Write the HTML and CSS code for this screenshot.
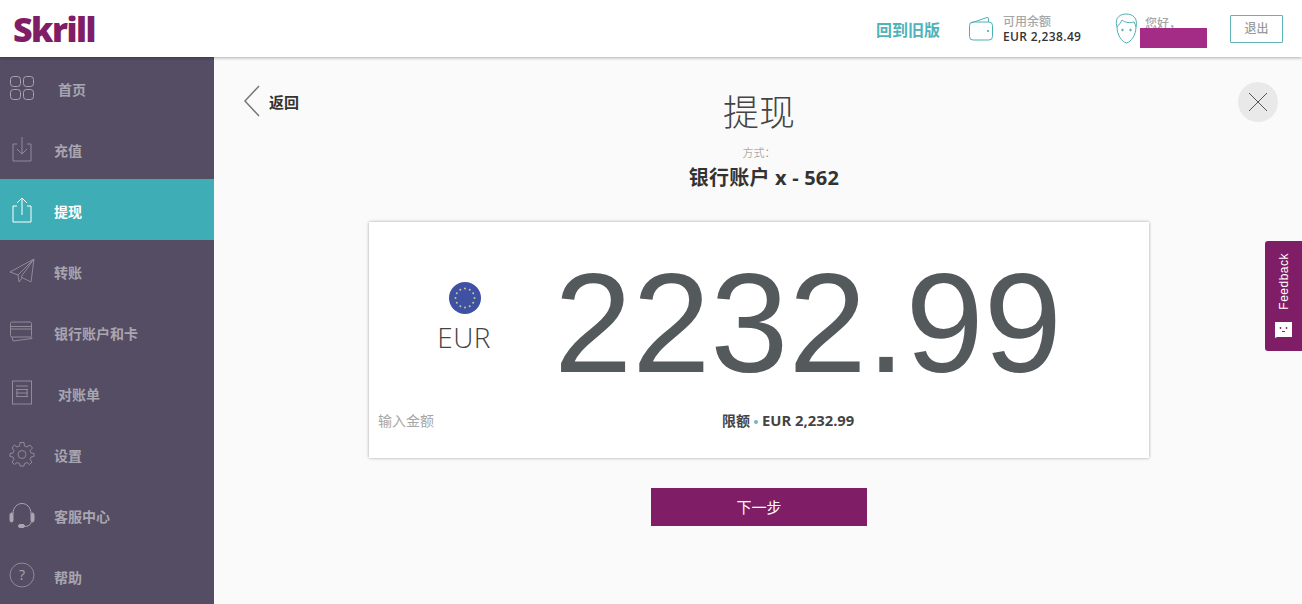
FILE: index.html
```html
<!DOCTYPE html>
<html lang="zh">
<head>
    <meta charset="UTF-8">
    <meta name="viewport" content="width=device-width, initial-scale=1.0">
    <title>提现</title>
    <link rel="stylesheet" href="styles.css">
</head>
<body>

    <!-- Top bar -->
    <header class="topbar">
        <div class="logo">Skrill</div>
        <div class="topbar-right">
            <a class="old-version">回到旧版</a>
            <div class="balance">
                <svg class="wallet-icon" width="25" height="26" viewBox="0 0 25 26" fill="none" stroke="#4fb0b3" stroke-width="1">
                    <path d="M2 7 L18 1.5 Q19.5 1 19.5 3 V6"/>
                    <rect x="0.5" y="6" width="23" height="18" rx="3.5"/>
                    <circle cx="19" cy="15" r="0.7" fill="#4fb0b3"/>
                </svg>
                <div class="balance-text">
                    <div class="balance-label">可用余额</div>
                    <div class="balance-value">EUR 2,238.49</div>
                </div>
            </div>
            <div class="user">
                <svg class="face-icon" width="23" height="31" viewBox="0 0 23 31" fill="none" stroke="#4fb0b3" stroke-width="1">
                    <path d="M2 14 C-1 4 6 1 11 1 C18 1 23 5 21 14 C21 22 16 29 11.500 30 C7 29 2 22 2 14 Z"/>
                    <path d="M2 14 C4 12 6 9 7 7 C10 10 16 10 19 9 C20 11 20.500 12 21 14"/>
                    <circle cx="7.500" cy="17" r="0.8" fill="#4fb0b3"/>
                    <circle cx="15.500" cy="17" r="0.8" fill="#4fb0b3"/>
                </svg>
                <div class="user-text">您好，</div>
                <div class="user-mask"></div>
            </div>
            <a class="logout">退出</a>
        </div>
    </header>

    <div class="page">

        <!-- Sidebar -->
        <nav class="sidebar">
            <a class="nav-item">
                <svg class="nav-icon" width="26" height="26" viewBox="0 0 26 26" fill="none" stroke="#a9a5b1">
                    <rect x="1.500" y="1.500" width="10" height="10" rx="3"/>
                    <rect x="14.500" y="1.500" width="10" height="10" rx="3"/>
                    <rect x="1.500" y="14.500" width="10" height="10" rx="3"/>
                    <rect x="14.500" y="14.500" width="10" height="10" rx="3"/>
                </svg>
                <span class="nav-label nav-label-far">首页</span>
            </a>
            <a class="nav-item">
                <svg class="nav-icon" width="26" height="26" viewBox="0 0 26 26" fill="none" stroke="#8f8b99">
                    <path d="M8 8 H4 V25 H22 V8 H18"/>
                    <path d="M13 1 V18 M8 13 L13 18 L18 13"/>
                </svg>
                <span class="nav-label">充值</span>
            </a>
            <a class="nav-item active">
                <svg class="nav-icon" width="26" height="26" viewBox="0 0 26 26" fill="none" stroke="#fff">
                    <path d="M8 9 H4 V25 H22 V9 H18"/>
                    <path d="M13 18 V1 M8 6 L13 1 L18 6"/>
                </svg>
                <span class="nav-label">提现</span>
            </a>
            <a class="nav-item">
                <svg class="nav-icon" width="26" height="26" viewBox="0 0 26 26" fill="none" stroke="#8f8b99">
                    <path d="M25 1 L1 14 L9 17 L25 1 L12 19 L22 24 Z"/>
                    <path d="M9 17 L10 24 L13 20"/>
                </svg>
                <span class="nav-label">转账</span>
            </a>
            <a class="nav-item">
                <svg class="nav-icon" width="26" height="26" viewBox="0 0 26 26" fill="none" stroke="#8f8b99">
                    <rect x="1.500" y="3" width="21" height="15" rx="1.500"/>
                    <path d="M1.500 7.500 H22.500 M1.500 10 H22.500"/>
                    <path d="M3 18 L4 22 L23 19.500 L22.500 18"/>
                </svg>
                <span class="nav-label">银行账户和卡</span>
            </a>
            <a class="nav-item">
                <svg class="nav-icon" width="26" height="26" viewBox="0 0 26 26" fill="none" stroke="#8f8b99">
                    <rect x="3.500" y="1" width="19" height="23"/>
                    <path d="M7 6 H19 M7 9.500 H19 M7 13 H19 M7 16.500 H19 M8 9.500 V16.500 M18 9.500 V16.500"/>
                </svg>
                <span class="nav-label nav-label-far">对账单</span>
            </a>
            <a class="nav-item">
                <svg class="nav-icon" width="26" height="26" viewBox="0 0 26 26" fill="none" stroke="#8f8b99">
                    <path d="M11 1.500 H15 L15.500 5 L18 6 L21 4 L23.500 7 L21 9.500 L22 12 L25 12.500 V15.500 L22 16 L21 18.500 L23 21 L20.500 23.500 L18 21.500 L15.500 22.500 L15 25 H11 L10.500 22.500 L8 21.500 L5.500 23.500 L3 21 L5 18.500 L4 16 L1 15.500 V12.500 L4 12 L5 9.500 L3 7 L5.500 4 L8 6 L10.500 5 Z"/>
                    <circle cx="13" cy="13.500" r="4"/>
                </svg>
                <span class="nav-label">设置</span>
            </a>
            <a class="nav-item">
                <svg class="nav-icon" width="26" height="26" viewBox="0 0 26 26" fill="none" stroke="#a9a5b1">
                    <path d="M4 12 C4 -2 22 -2 22 12"/>
                    <rect x="1" y="11" width="3" height="9" rx="1.500" fill="#a9a5b1"/>
                    <rect x="22" y="11" width="3" height="9" rx="1.500" fill="#a9a5b1"/>
                    <path d="M22 20 C22 23 19 24.500 15 24.500"/>
                    <rect x="9.500" y="22.500" width="6" height="3" rx="1.500" fill="#a9a5b1"/>
                </svg>
                <span class="nav-label">客服中心</span>
            </a>
            <a class="nav-item">
                <svg class="nav-icon nav-icon-up" width="26" height="26" viewBox="0 0 26 26" fill="none" stroke="#8f8b99">
                    <circle cx="13" cy="13" r="12"/>
                    <text x="13" y="18" class="help-mark">?</text>
                </svg>
                <span class="nav-label">帮助</span>
            </a>
        </nav>

        <!-- Main content -->
        <main class="content">
            <a class="back">
                <svg width="18" height="32" viewBox="0 0 18 32" fill="none" stroke="#77797b" stroke-width="1.500">
                    <path d="M16 1 L2 16 L16 31"/>
                </svg>
                <span>返回</span>
            </a>
            <a class="close">
                <svg width="20" height="20" viewBox="0 0 20 20" fill="none" stroke="#555" stroke-width="1">
                    <path d="M1 1 L19 19 M19 1 L1 19"/>
                </svg>
            </a>

            <h1 class="title">提现</h1>
            <div class="method-label">方式：</div>
            <div class="method-name">银行账户 x - 562</div>

            <section class="card">
                <div class="card-row">
                    <div class="currency">
                        <svg class="flag" width="32" height="32" viewBox="0 0 32 32">
                            <circle cx="16" cy="16" r="16" fill="#3f51a3"/>
                            <g fill="#c9c98a">
                                <circle cx="16" cy="6.500" r="1"/>
                                <circle cx="20.700" cy="7.800" r="1"/>
                                <circle cx="24.200" cy="11.300" r="1"/>
                                <circle cx="25.500" cy="16" r="1"/>
                                <circle cx="24.200" cy="20.700" r="1"/>
                                <circle cx="20.700" cy="24.200" r="1"/>
                                <circle cx="16" cy="25.500" r="1"/>
                                <circle cx="11.300" cy="24.200" r="1"/>
                                <circle cx="7.800" cy="20.700" r="1"/>
                                <circle cx="6.500" cy="16" r="1"/>
                                <circle cx="7.800" cy="11.300" r="1"/>
                                <circle cx="11.300" cy="7.800" r="1"/>
                            </g>
                        </svg>
                        <div class="currency-code">EUR</div>
                    </div>
                    <div class="amount">2232.99</div>
                </div>
                <div class="card-foot">
                    <span class="amount-hint">输入金额</span>
                    <span class="limit">限额<i class="dot"></i><span class="limit-value">EUR 2,232.99</span></span>
                </div>
            </section>

            <button class="next">下一步</button>

            <div class="feedback">
                <span class="feedback-text">Feedback</span>
                <svg width="19" height="17" viewBox="0 0 19 17">
                    <path d="M1 1 H18 V16 H3 L1 17 Z" fill="#fff"/>
                    <circle cx="6.500" cy="7" r="0.900" fill="#7f1d66"/>
                    <circle cx="12.500" cy="7" r="0.900" fill="#7f1d66"/>
                    <path d="M8 10 H11 V11 H8 Z" fill="#7f1d66"/>
                </svg>
            </div>
        </main>
    </div>

</body>
</html>
```

FILE: styles.css
```css
/* Global Styles */
html, body {
    height: 100%;
}

body {
    font-family: 'Open Sans', 'Noto Sans CJK SC', sans-serif;
    margin: 0;
    padding: 0;
    height: 604px;
    overflow: hidden;
    background: #fafafa;
    color: #333;
    display: flex;
    flex-direction: column;
}

a {
    cursor: pointer;
}

/* Top bar */
.topbar {
    height: 57px;
    flex-shrink: 0;
    background: #fff;
    box-shadow: 0 1px 3px rgba(0, 0, 0, 0.3);
    display: flex;
    justify-content: space-between;
    align-items: center;
    position: relative;
    z-index: 2;
}

.logo {
    font-family: 'Open Sans', sans-serif;
    font-weight: 800;
    font-size: 34px;
    line-height: 56px;
    letter-spacing: -1.500px;
    color: #7f1d66;
    margin-left: 13px;
    height: 56px;
}

.topbar-right {
    display: flex;
    align-items: center;
    padding-right: 19px;
}

.old-version {
    font-size: 16px;
    font-weight: 700;
    color: #4fb3ba;
    width: 92px;
    margin-left: -1px;
    margin-right: 1px;
}

.balance {
    display: flex;
    align-items: center;
    gap: 9px;
    width: 146px;
}

.balance-label {
    font-size: 12px;
    font-weight: 500;
    line-height: 15px;
    color: #a6a6a6;
}

.balance-value {
    font-size: 12px;
    font-weight: 600;
    line-height: 15px;
    letter-spacing: 0.35px;
    color: #333;
}

.user {
    width: 115px;
    height: 40px;
    display: flex;
    gap: 7px;
    position: relative;
}

.face-icon {
    margin-top: 4px;
}

.user-text {
    font-size: 12px;
    font-weight: 500;
    line-height: 30px;
    height: 20px;
    color: #a6a6a6;
}

.user-mask {
    position: absolute;
    left: 25px;
    top: 19px;
    width: 67px;
    height: 20px;
    background: #a52c86;
}

.logout {
    width: 51px;
    height: 26px;
    border: 1px solid #5fb3b5;
    border-radius: 1px;
    font-size: 12px;
    font-weight: 500;
    line-height: 26px;
    text-align: center;
    color: #9a9a9a;
}

.page {
    flex: 1;
    display: flex;
    min-height: 0;
}

/* Sidebar */
.sidebar {
    width: 214px;
    flex-shrink: 0;
    background: #544d63;
    overflow: hidden;
}

.nav-item {
    height: 61px;
    display: flex;
    align-items: center;
    padding-left: 9px;
    color: #a9a5b1;
    font-size: 14px;
    font-weight: 700;
}

.nav-item.active {
    background: #3fadb5;
    color: #fff;
}

.nav-icon {
    flex-shrink: 0;
}

.nav-icon-up {
    margin-bottom: 2px;
}

.nav-label {
    margin-left: 19px;
    padding-top: 2px;
}

.nav-label-far {
    margin-left: 23px;
}

.help-mark {
    font-family: 'Open Sans', sans-serif;
    font-size: 14px;
    font-weight: 400;
    text-anchor: middle;
    fill: #a9a5b1;
    stroke: none;
}

/* Main content */
.content {
    flex: 1;
    position: relative;
    display: flex;
    flex-direction: column;
    align-items: center;
    padding-left: 2px;
    background: #fafafa;
}

.back {
    position: absolute;
    left: 29px;
    top: 28px;
    display: flex;
    align-items: center;
    gap: 8px;
    font-size: 15px;
    font-weight: 700;
    color: #333;
}

.close {
    position: absolute;
    right: 24px;
    top: 25px;
    width: 40px;
    height: 40px;
    border-radius: 50%;
    background: #e9e9e9;
    display: flex;
    align-items: center;
    justify-content: center;
}

.title {
    margin: 33px 0 0;
    font-size: 36px;
    line-height: 46px;
    font-weight: 300;
    color: #444;
}

.method-label {
    margin-top: 9px;
    font-size: 11px;
    line-height: 16px;
    font-weight: 300;
    color: #8c8c8c;
}

.method-name {
    margin-top: 3px;
    padding-left: 10px;
    font-size: 20px;
    line-height: 28px;
    font-weight: 700;
    letter-spacing: 0.2px;
    color: #333;
}

/* Amount card */
.card {
    width: 780px;
    height: 236px;
    margin-top: 30px;
    background: #fff;
    box-shadow: 0 0 3px rgba(0, 0, 0, 0.35);
    display: flex;
    flex-direction: column;
}

.card-row {
    display: flex;
    height: 183px;
}

.currency {
    width: 192px;
    flex-shrink: 0;
    display: flex;
    flex-direction: column;
    align-items: center;
    padding-top: 60px;
    box-sizing: border-box;
}

.currency-code {
    margin-top: 3px;
    margin-left: -2px;
    font-size: 28px;
    line-height: 40px;
    font-weight: 300;
    letter-spacing: 0.4px;
    color: #444;
}

.amount {
    font-family: 'Liberation Sans', sans-serif;
    font-size: 140.5px;
    line-height: 184px;
    color: #54595c;
    margin-left: -7px;
    padding-top: 10px;
}

.card-foot {
    display: flex;
    align-items: center;
    height: 30px;
    position: relative;
}

.amount-hint {
    margin-left: 9px;
    width: 344px;
    font-size: 14px;
    color: #a6a6a6;
}

.limit {
    font-size: 14px;
    font-weight: 700;
    color: #444;
}

.limit-value {
    font-size: 14.800px;
}

.dot {
    display: inline-block;
    width: 4px;
    height: 4px;
    border-radius: 50%;
    background: #6fb5bd;
    margin: 0 4px;
    vertical-align: middle;
}

/* Button */
.next {
    width: 216px;
    height: 38px;
    margin-top: 30px;
    padding: 0 0 2px;
    border: none;
    background: #7f1d66;
    color: #fff;
    font-family: inherit;
    font-size: 15px;
    cursor: pointer;
}

/* Feedback tab */
.feedback {
    position: absolute;
    right: 0;
    top: 184px;
    width: 37px;
    height: 110px;
    background: #7f1d66;
    border-radius: 3px 0 0 3px;
    display: flex;
    flex-direction: column;
    align-items: center;
    gap: 11px;
    padding-top: 12px;
    box-sizing: border-box;
}

.feedback-text {
    writing-mode: vertical-rl;
    transform: rotate(180deg);
    font-family: 'Liberation Sans', sans-serif;
    font-size: 12px;
    letter-spacing: 0.500px;
    color: #fff;
}
```
